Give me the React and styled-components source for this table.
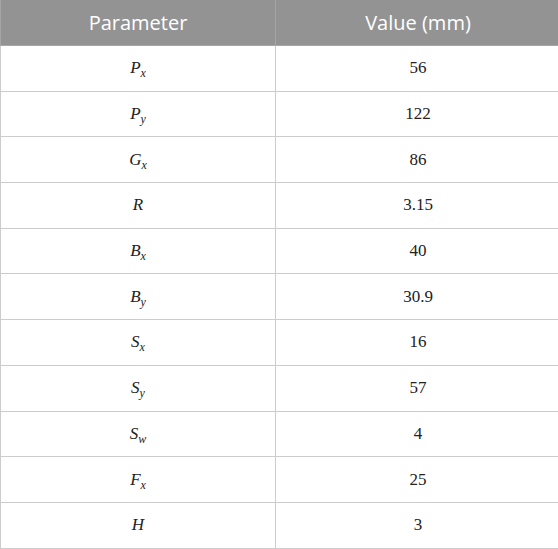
import React from "react";
import styled, { createGlobalStyle } from "styled-components";

const Global = createGlobalStyle`
  html, body { margin: 0; padding: 0; background: #ffffff; }
`;

const Table = styled.table`
  width: 558px;
  border-collapse: collapse;
  table-layout: fixed;
`;

const HeadCell = styled.th`
  height: 45px;
  padding: 0;
  background: #939393;
  color: #ffffff;
  font-family: "Open Sans", "Noto Sans", sans-serif;
  font-weight: 400;
  font-size: 20px;
  text-align: center;
  vertical-align: middle;
  border: 1px solid #a6a6a6;
  border-top: none;
  width: ${(p) => p.$w}px;
`;

const Cell = styled.td`
  height: 44.7px;
  padding: 0;
  text-align: center;
  vertical-align: middle;
  font-family: "Liberation Serif", "Times New Roman", serif;
  font-size: 17px;
  color: #222222;
  border: 1px solid #cccccc;
  font-style: ${(p) => (p.$italic ? "italic" : "normal")};
`;

const Sub = styled.sub`
  font-size: 12px;
  vertical-align: -4px;
  line-height: 0;
`;

const rows = [
  ["P", "x", "56"],
  ["P", "y", "122"],
  ["G", "x", "86"],
  ["R", "", "3.15"],
  ["B", "x", "40"],
  ["B", "y", "30.9"],
  ["S", "x", "16"],
  ["S", "y", "57"],
  ["S", "w", "4"],
  ["F", "x", "25"],
  ["H", "", "3"],
];

export default function App() {
  return (
    <>
      <Global />
      <Table>
        <thead>
          <tr>
            <HeadCell $w={274}>Parameter</HeadCell>
            <HeadCell $w={284}>Value (mm)</HeadCell>
          </tr>
        </thead>
        <tbody>
          {rows.map(([sym, sub, val]) => (
            <tr key={sym + sub}>
              <Cell $italic>
                {sym}
                {sub && <Sub>{sub}</Sub>}
              </Cell>
              <Cell>{val}</Cell>
            </tr>
          ))}
        </tbody>
      </Table>
    </>
  );
}
